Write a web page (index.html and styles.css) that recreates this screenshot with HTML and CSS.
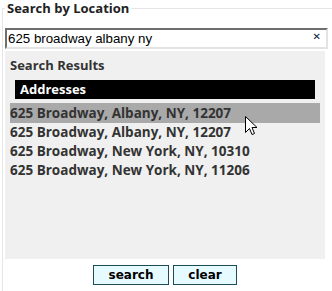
FILE: index.html
```html
<!DOCTYPE html>
<html lang="en">
<head>
    <meta charset="UTF-8">
    <title>Search by Location</title>
    <link rel="stylesheet" href="styles.css">
</head>
<body>
    <fieldset class="location">
        <legend>Search by Location</legend>
        <div class="query">
            <input type="text" id="query" value="625 broadway albany ny">
            <span class="query-clear">&#x2715;</span>
        </div>
        <div class="results">
            <div class="results-title">Search Results</div>
            <div class="group-title">Addresses</div>
            <ul class="result-list">
                <li class="active">625 Broadway, Albany, NY, 12207</li>
                <li>625 Broadway, Albany, NY, 12207</li>
                <li>625 Broadway, New York, NY, 10310</li>
                <li>625 Broadway, New York, NY, 11206</li>
            </ul>
            <svg class="pointer" width="13" height="21" viewBox="0 0 13 21">
                <path d="M0.5 0.5 L0.5 16.5 L4.5 12.5 L7 18.5 L9.5 17.5 L7 11.5 L12 11.5 Z" fill="#fff" stroke="#000" stroke-width="1"/>
            </svg>
        </div>
        <div class="actions">
            <button class="btn btn-search">search</button>
            <button class="btn btn-clear">clear</button>
        </div>
    </fieldset>
</body>
</html>
```

FILE: styles.css
```css
body {
    margin: 0;
    background: #fff;
    font-family: 'Open Sans', 'Noto Sans', Arial, sans-serif;
    color: #333;
}
.location {
    margin: 0 0 0 2px;
    padding: 10px 0 20px 2px;
    border: 1px solid #e6e6e6;
    border-right: none;
    border-bottom: none;
    min-width: 0;
}
.location legend {
    padding: 0 2px;
    font-size: 13px;
    font-weight: 700;
    line-height: 16px;
    color: #222;
}
.query {
    position: relative;
    width: 323px;
}
.query input {
    box-sizing: border-box;
    width: 323px;
    height: 21px;
    margin: 0;
    padding: 0 20px 0 1px;
    border: 2px solid;
    border-color: #6e6e6e #e3e3e3 #e3e3e3 #6e6e6e;
    font-family: 'Liberation Sans', Arial, sans-serif;
    font-size: 13.3px;
    color: #000;
    outline: none;
}
.query-clear {
    position: absolute;
    right: 7px;
    top: 3px;
    font-family: 'DejaVu Sans', sans-serif;
    font-size: 10px;
    font-weight: 700;
    line-height: 15px;
    color: #0a1a3a;
}
.results {
    position: relative;
    box-sizing: border-box;
    width: 320px;
    height: 208px;
    margin-top: 2px;
    padding: 6px 5px 0 5px;
    background: #f0f0f0;
}
.results-title {
    font-size: 13px;
    font-weight: 700;
    line-height: 17px;
    color: #333;
}
.group-title {
    margin: 6px 5px 0 5px;
    padding-left: 5px;
    height: 19px;
    background: #000;
    color: #fff;
    font-size: 13px;
    font-weight: 700;
    line-height: 19px;
}
.result-list {
    list-style: none;
    margin: 4px 0 0 0;
    padding: 0;
}
.result-list li {
    height: 19px;
    font-size: 13.5px;
    font-weight: 700;
    line-height: 19px;
    color: #333;
    white-space: nowrap;
}
.result-list li.active {
    height: 20px;
    line-height: 20px;
    background: #a9a9a9;
}
.pointer {
    position: absolute;
    left: 240px;
    top: 65px;
}
.actions {
    display: flex;
    justify-content: center;
    gap: 4px;
    width: 320px;
    margin-top: 6px;
}
.btn {
    box-sizing: border-box;
    height: 20px;
    padding: 0;
    border: 1px solid #1d4b59;
    background: #e6fbff;
    font-family: 'DejaVu Sans', Verdana, sans-serif;
    font-size: 12px;
    font-weight: 700;
    color: #000;
}
.btn-search { width: 76px; }
.btn-clear { width: 64px; }
```
